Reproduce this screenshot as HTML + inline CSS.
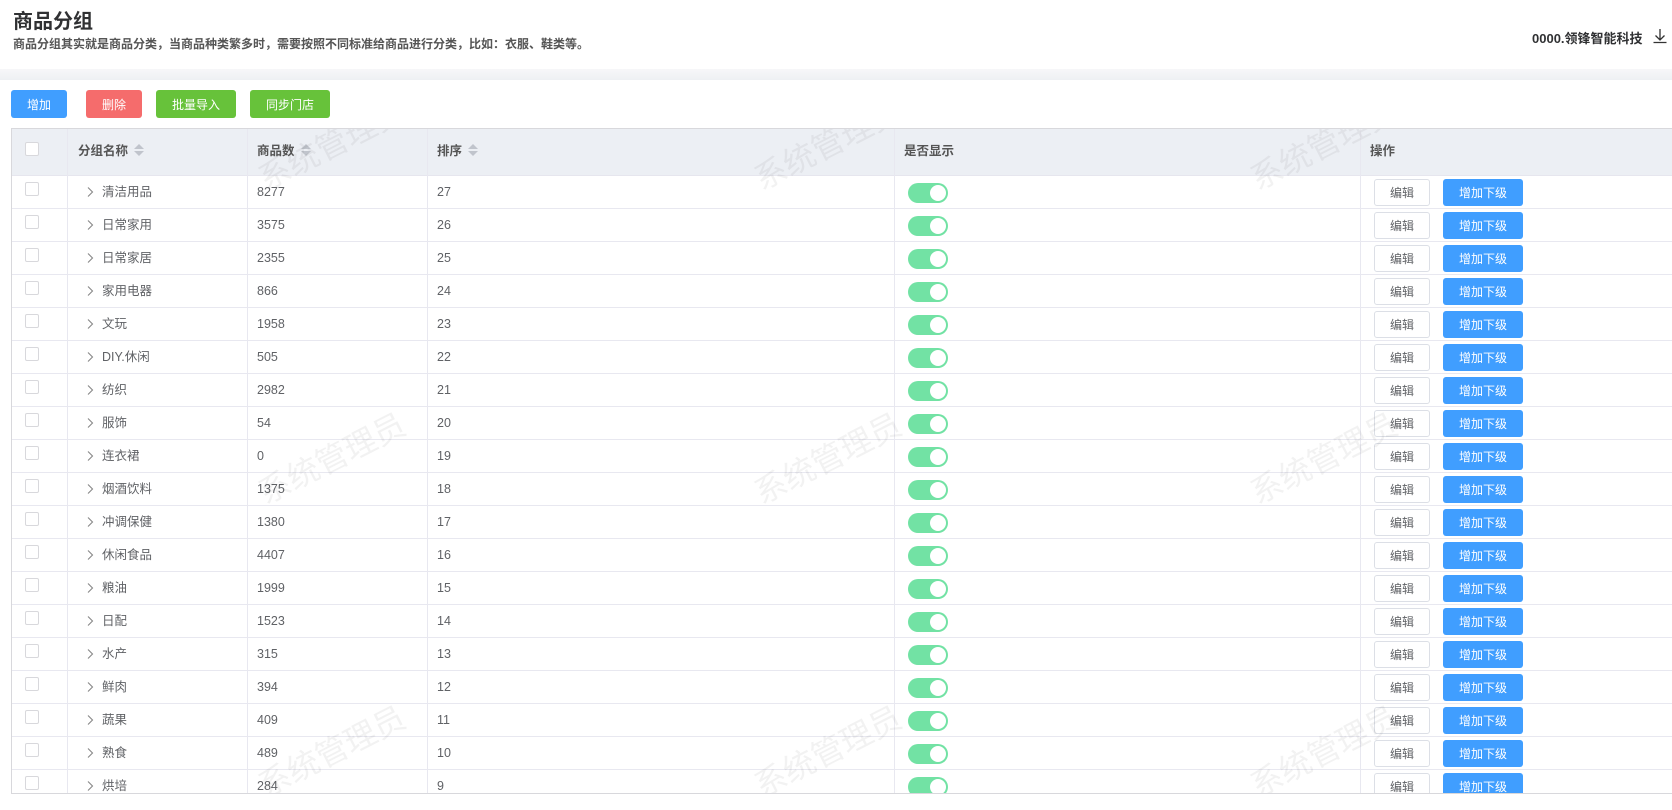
<!DOCTYPE html>
<html><head><meta charset="utf-8"><style>
*{margin:0;padding:0;box-sizing:border-box}
body{width:1672px;height:810px;overflow:hidden;background:#fff;font-family:"Liberation Sans","Noto Sans CJK SC",sans-serif;color:#606266;position:relative}
.t{position:absolute;left:13px;top:8px;font-size:20px;line-height:28px;font-weight:bold;color:#303133}
.st{position:absolute;left:13px;top:36px;font-size:12px;line-height:16px;color:#555;font-weight:bold}
.org{position:absolute;left:1532px;top:30px;font-size:13px;line-height:18px;font-weight:bold;color:#303133}
.band{position:absolute;left:0;top:69px;width:1672px;height:11px;background:linear-gradient(#f7f7f9,#eef0f3)}
.btn{position:absolute;top:90px;height:28px;border-radius:3px;color:#fff;font-size:12px;display:flex;align-items:center;justify-content:center}
.tbl{position:absolute;left:11px;top:128px;width:1661px;height:666px;border-top:1px solid #d8d8dc;border-left:1px solid #d8d8dc;border-bottom:1px solid #d8d8dc;overflow:hidden}
.hd{position:absolute;left:0;top:0;width:100%;height:47px;background:#eceff4;border-bottom:1px solid #e6e6ee}
.c{position:absolute;font-size:12.5px;line-height:16px;height:16px;white-space:nowrap}
.vl{position:absolute;top:0;width:1px;height:666px;background:#e8e8f0}
.hl{position:absolute;left:0;width:100%;height:1px;background:#e8e8f0}
.cb{position:absolute;left:13px;width:14px;height:14px;border:1px solid #d8d8dc;border-radius:2px;background:#fff}
.sw{position:absolute;left:896px;width:40px;height:20px;border-radius:10px;background:#72e2a4}
.sw:after{content:"";position:absolute;right:2px;top:2px;width:16px;height:16px;border-radius:50%;background:#fff}
.ed{position:absolute;left:1362px;width:56px;height:27px;border:1px solid #dcdfe6;border-radius:3px;font-size:12px;display:flex;align-items:center;justify-content:center;color:#606266}
.ad{position:absolute;left:1431px;width:80px;height:27px;border-radius:3px;background:#409eff;color:#fff;font-size:12px;display:flex;align-items:center;justify-content:center}
.sort{display:inline-block;vertical-align:top;margin-left:6px;margin-top:1px;width:10px;height:14px;position:relative}
.sort:before{content:"";position:absolute;left:0;top:0;border:5px solid transparent;border-bottom-color:#c0c4cc;border-top:0}
.sort:after{content:"";position:absolute;left:0;top:7px;border:5px solid transparent;border-top-color:#c0c4cc;border-bottom:0}
.wm{position:absolute;font-size:32px;color:rgba(0,0,0,0.05);transform:rotate(-27deg);white-space:nowrap}
.chev{position:absolute;left:74px}
</style></head><body>
<div class="t">商品分组</div>
<div class="st">商品分组其实就是商品分类，当商品种类繁多时，需要按照不同标准给商品进行分类，比如：衣服、鞋类等。</div>
<div class="org">0000.领锋智能科技</div>
<svg style="position:absolute;left:1652px;top:28px" width="16" height="16" viewBox="0 0 16 16" fill="none" stroke="#333" stroke-width="1.3"><path d="M8 1v11M3.5 7.5L8 12l4.5-4.5M1.5 14.5h13"/></svg>
<div class="band"></div>
<div class="btn" style="left:11px;width:56px;background:#409eff">增加</div>
<div class="btn" style="left:86px;width:56px;background:#f56c6c">删除</div>
<div class="btn" style="left:156px;width:80px;background:#67c23a">批量导入</div>
<div class="btn" style="left:250px;width:80px;background:#67c23a">同步门店</div>
<div class="tbl">
<div class="hd"></div>
<div id="rows"></div>
</div>
<script>
var d=[["清洁用品",8277,27],["日常家用",3575,26],["日常家居",2355,25],["家用电器",866,24],["文玩",1958,23],["DIY.休闲",505,22],["纺织",2982,21],["服饰",54,20],["连衣裙",0,19],["烟酒饮料",1375,18],["冲调保健",1380,17],["休闲食品",4407,16],["粮油",1999,15],["日配",1523,14],["水产",315,13],["鲜肉",394,12],["蔬果",409,11],["熟食",489,10],["烘培",284,9]];
var h='';
[55,235,415,882,1348].forEach(function(x){h+='<div class="vl" style="left:'+x+'px"></div>'});
h+='<div class="cb" style="top:13px"></div>';
var hs='font-weight:bold;color:#555;top:14px';
h+='<div class="c" style="left:66px;'+hs+'">分组名称<span class="sort"></span></div>';
h+='<div class="c" style="left:245px;'+hs+'">商品数<span class="sort"></span></div>';
h+='<div class="c" style="left:425px;'+hs+'">排序<span class="sort"></span></div>';
h+='<div class="c" style="left:892px;'+hs+'">是否显示</div>';
h+='<div class="c" style="left:1358px;'+hs+'">操作</div>';
d.forEach(function(r,i){var y=47+33*i;
h+='<div class="hl" style="top:'+(y+32)+'px"></div>';
h+='<div class="cb" style="top:'+(y+6)+'px"></div>';
h+='<svg class="chev" style="top:'+(y+10)+'px" width="8" height="12" viewBox="0 0 8 12" fill="none" stroke="#888" stroke-width="1.1"><path d="M2 1.5l4.5 4.5L2 10.5"/></svg>';
h+='<div class="c" style="left:90px;top:'+(y+8)+'px">'+r[0]+'</div>';
h+='<div class="c" style="left:245px;top:'+(y+8)+'px">'+r[1]+'</div>';
h+='<div class="c" style="left:425px;top:'+(y+8)+'px">'+r[2]+'</div>';
h+='<div class="sw" style="top:'+(y+7)+'px"></div>';
h+='<div class="ed" style="top:'+(y+3)+'px">编辑</div>';
h+='<div class="ad" style="top:'+(y+3)+'px">增加下级</div>';
});
[[330,139],[826,139],[1322,139],[330,453],[826,453],[1322,453],[330,746],[826,746],[1322,746]].forEach(function(p){h+='<div class="wm" style="left:'+(p[0]-11-80)+'px;top:'+(p[1]-128-20)+'px">系统管理员</div>'});
document.getElementById('rows').innerHTML=h;
</script>
</body></html>
